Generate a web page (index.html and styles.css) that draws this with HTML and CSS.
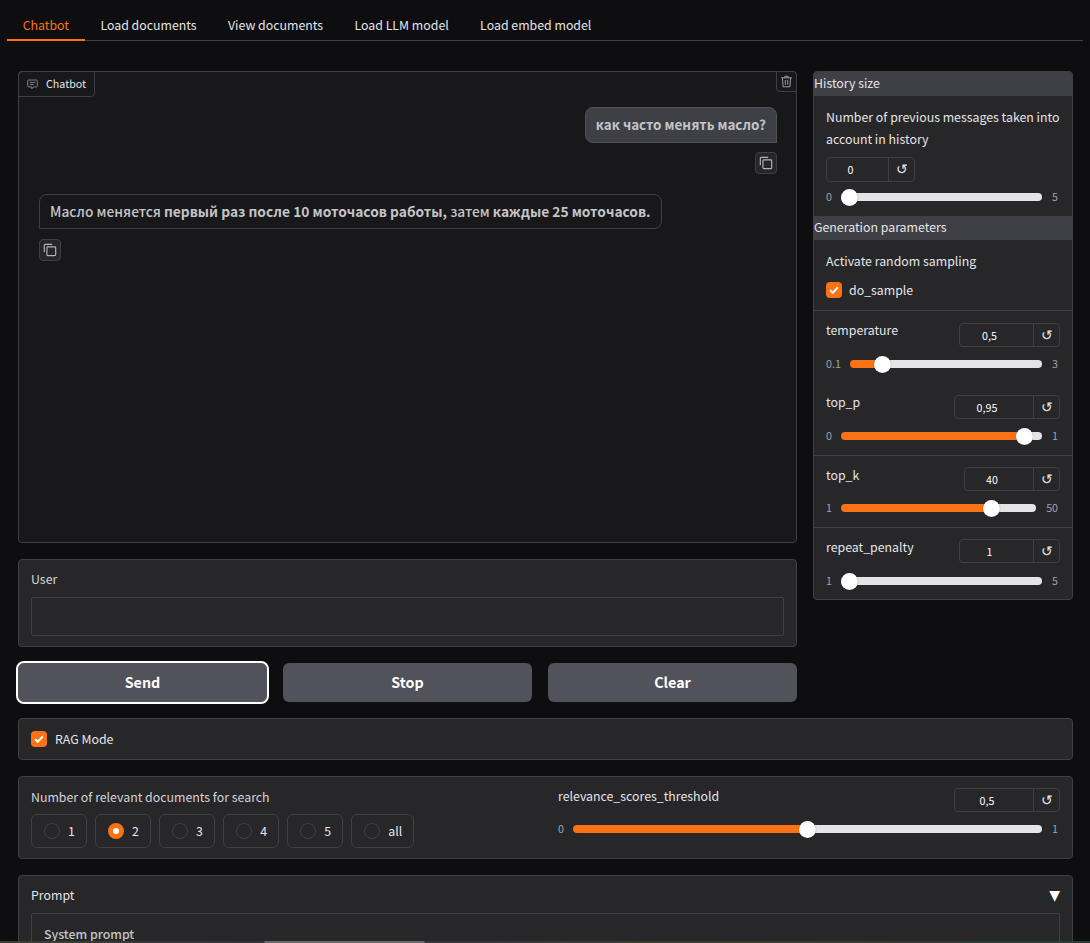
FILE: index.html
```html
<!DOCTYPE html>
<html lang="en">
<head>
    <meta charset="UTF-8">
    <meta name="viewport" content="width=device-width, initial-scale=1.0">
    <title>Chatbot</title>
    <link rel="stylesheet" href="styles.css">
</head>
<body>
    <nav class="tabs">
        <a class="tab active">Chatbot</a>
        <a class="tab">Load documents</a>
        <a class="tab">View documents</a>
        <a class="tab">Load LLM model</a>
        <a class="tab">Load embed model</a>
    </nav>

    <main class="page">
        <div class="top-row">
            <div class="left-col">
                <section class="chat">
                    <div class="chat-label">
                        <svg class="chat-icon" viewBox="0 0 16 16" width="11" height="11" fill="none" stroke="currentColor" stroke-width="1.3">
                            <path d="M2.5 1.5h11a1.5 1.5 0 0 1 1.5 1.5v7a1.5 1.5 0 0 1-1.5 1.5H9L7 14.5v-3H2.5A1.5 1.5 0 0 1 1 10V3a1.5 1.5 0 0 1 1.5-1.5z"/>
                            <path d="M4 5h8M4 8h6"/>
                        </svg>
                        Chatbot
                    </div>
                    <button class="chat-clear" aria-label="Clear">
                        <svg viewBox="0 0 16 16" width="13" height="13" fill="none" stroke="currentColor" stroke-width="1.2">
                            <path d="M1.5 3.5h13M6 3.5V1.5h4v2M3 3.5l.8 11h8.4l.8-11M6.5 6v6M9.5 6v6"/>
                        </svg>
                    </button>

                    <div class="msg-user">
                        <div class="bubble bubble-user">как часто менять масло?</div>
                        <button class="copy" aria-label="Copy">
                            <svg viewBox="0 0 16 16" width="14" height="14" fill="none" stroke="currentColor" stroke-width="1.3">
                                <path d="M1.5 10.5V2.5a1 1 0 0 1 1-1h8"/>
                                <rect x="4.5" y="4.5" width="10" height="10" rx="1"/>
                            </svg>
                        </button>
                    </div>
                    <div class="msg-bot">
                        <div class="bubble bubble-bot">Масло меняется <b>первый раз после 10 моточасов работы,</b> затем <b>каждые 25 моточасов.</b></div>
                        <button class="copy" aria-label="Copy">
                            <svg viewBox="0 0 16 16" width="14" height="14" fill="none" stroke="currentColor" stroke-width="1.3">
                                <path d="M1.5 10.5V2.5a1 1 0 0 1 1-1h8"/>
                                <rect x="4.5" y="4.5" width="10" height="10" rx="1"/>
                            </svg>
                        </button>
                    </div>
                </section>

                <section class="panel user-box">
                    <label class="field-label" for="userText">User</label>
                    <input class="user-input" id="userText" type="text">
                </section>

                <div class="actions">
                    <button class="btn btn-focus">Send</button>
                    <button class="btn">Stop</button>
                    <button class="btn">Clear</button>
                </div>
            </div>

            <aside class="side panel">
                <h3 class="side-head">History size</h3>
                <div class="block block-history">
                    <div class="block-text">Number of previous messages taken into account in history</div>
                    <div class="num num-history"><span class="num-val">0</span><span class="num-reset">↺</span></div>
                    <div class="slider-row">
                        <span class="lim">0</span>
                        <input type="range" min="0" max="5" step="1" value="0" style="--pct:0%">
                        <span class="lim">5</span>
                    </div>
                </div>

                <h3 class="side-head">Generation parameters</h3>
                <div class="block block-sample">
                    <div class="block-text">Activate random sampling</div>
                    <label class="check">
                        <span class="check-box"><svg viewBox="0 0 16 16" width="16" height="16"><path d="M4.2 8.3l2.6 2.5 5-5.4" fill="none" stroke="#fff" stroke-width="2"/></svg></span>
                        do_sample
                    </label>
                </div>

                <div class="block block-param block-first">
                    <div class="param-head">
                        <span>temperature</span>
                        <div class="num num-w101"><span class="num-val">0,5</span><span class="num-reset">↺</span></div>
                    </div>
                    <div class="slider-row">
                        <span class="lim">0.1</span>
                        <input type="range" min="0.1" max="3" step="0.1" value="0.5" style="--pct:17%">
                        <span class="lim">3</span>
                    </div>
                    <div class="param-head param-next">
                        <span>top_p</span>
                        <div class="num num-w106"><span class="num-val">0,95</span><span class="num-reset">↺</span></div>
                    </div>
                    <div class="slider-row">
                        <span class="lim">0</span>
                        <input type="range" min="0" max="1" step="0.05" value="0.95" style="--pct:91%">
                        <span class="lim">1</span>
                    </div>
                </div>

                <div class="block block-param">
                    <div class="param-head param-low">
                        <span>top_k</span>
                        <div class="num num-w96"><span class="num-val">40</span><span class="num-reset">↺</span></div>
                    </div>
                    <div class="slider-row">
                        <span class="lim">1</span>
                        <input type="range" min="1" max="50" step="1" value="40" style="--pct:77%">
                        <span class="lim">50</span>
                    </div>
                </div>

                <div class="block block-param block-last">
                    <div class="param-head param-low">
                        <span>repeat_penalty</span>
                        <div class="num num-w101"><span class="num-val">1</span><span class="num-reset">↺</span></div>
                    </div>
                    <div class="slider-row">
                        <span class="lim">1</span>
                        <input type="range" min="1" max="5" step="0.1" value="1" style="--pct:0%">
                        <span class="lim">5</span>
                    </div>
                </div>
            </aside>
        </div>

        <section class="panel rag">
            <label class="check">
                <span class="check-box"><svg viewBox="0 0 16 16" width="16" height="16"><path d="M4.2 8.3l2.6 2.5 5-5.4" fill="none" stroke="#fff" stroke-width="2"/></svg></span>
                RAG Mode
            </label>
        </section>

        <section class="panel search">
            <div class="search-docs">
                <div class="field-label">Number of relevant documents for search</div>
                <div class="radios">
                    <label class="radio"><span class="dot"></span>1</label>
                    <label class="radio"><span class="dot dot-on"></span>2</label>
                    <label class="radio"><span class="dot"></span>3</label>
                    <label class="radio"><span class="dot"></span>4</label>
                    <label class="radio"><span class="dot"></span>5</label>
                    <label class="radio"><span class="dot"></span>all</label>
                </div>
            </div>
            <div class="search-threshold">
                <div class="param-head param-low">
                    <span>relevance_scores_threshold</span>
                    <div class="num num-w106"><span class="num-val">0,5</span><span class="num-reset">↺</span></div>
                </div>
                <div class="slider-row">
                    <span class="lim">0</span>
                    <input type="range" min="0" max="1" step="0.05" value="0.5" style="--pct:50%">
                    <span class="lim">1</span>
                </div>
            </div>
        </section>

        <section class="panel prompt">
            <div class="prompt-head">
                <span>Prompt</span>
                <span class="arrow">▼</span>
            </div>
            <div class="prompt-box">System prompt</div>
        </section>
    </main>

    <div class="bottom-strip"></div>
</body>
</html>
```
FILE: styles.css
```css
/* General page styling */
html, body {
    height: 100%;
    overflow: hidden;
}

body {
    margin: 0;
    background: #0e0e11;
    color: #e4e4e7;
    font-family: "Noto Sans CJK SC", "Noto Sans", sans-serif;
    font-size: 12.35px;
    line-height: 22px;
}

* {
    box-sizing: border-box;
}

button {
    font-family: inherit;
    color: inherit;
    cursor: pointer;
}

/* Tabs */
.tabs {
    display: flex;
    margin: 10px 7px 0;
    height: 31px;
    border-bottom: 1px solid #3f3f46;
}

.tab {
    padding: 0 15.7px;
    height: 31px;
    line-height: 30px;
    color: #e4e4e7;
}

.tab.active {
    color: #f97316;
    border-bottom: 2px solid #f97316;
}

/* Main layout */
.page {
    padding: 30px 17px 0 18px;
}

.top-row {
    display: flex;
    gap: 16px;
    align-items: flex-start;
}

.left-col {
    width: 779px;
    flex: none;
}

.panel {
    background: #27272a;
    border: 1px solid #3f3f46;
    border-radius: 4px;
}

/* Chat window */
.chat {
    position: relative;
    height: 472px;
    background: #18181b;
    border: 1px solid #3f3f46;
    border-radius: 4px;
    padding: 35px 19px 0 20px;
}

.chat-label {
    position: absolute;
    left: -1px;
    top: -1px;
    display: flex;
    align-items: center;
    gap: 8px;
    height: 26px;
    width: 77px;
    padding-left: 8px;
    font-size: 10.7px;
    border: 1px solid #3f3f46;
    border-radius: 4px 0 4px 0;
}

.chat-icon {
    color: #8a8a92;
}

.chat-clear {
    position: absolute;
    right: -1px;
    top: -1px;
    width: 21px;
    height: 21px;
    padding: 0;
    display: flex;
    align-items: center;
    justify-content: center;
    background: #18181b;
    border: 1px solid #3f3f46;
    border-radius: 0 4px 0 4px;
    color: #a1a1aa;
}

.msg-user {
    display: flex;
    flex-direction: column;
    align-items: flex-end;
}

.msg-bot {
    display: flex;
    flex-direction: column;
    align-items: flex-start;
    margin-top: 20px;
}

.bubble {
    border: 1px solid #3f3f46;
    color: #c4c4c8;
    font-size: 13.75px;
    line-height: 22px;
    font-weight: 500;
}

.bubble-user {
    height: 36px;
    padding: 5px 10px;
    background: #3f3f46;
    border-color: #52525b;
    border-radius: 8px 8px 0 8px;
    font-size: 13.45px;
    font-weight: 700;
}

.bubble-bot {
    height: 35px;
    padding: 5px 10px;
    border-radius: 8px 8px 8px 0;
}

.bubble-bot b {
    font-weight: 700;
}

.copy {
    width: 22px;
    height: 22px;
    margin-top: 9px;
    padding: 0;
    display: flex;
    align-items: center;
    justify-content: center;
    background: #27272a;
    border: 1px solid #3f3f46;
    border-radius: 4px;
    color: #b4b4b8;
}

.msg-bot .copy {
    margin-top: 10px;
}

/* User input */
.user-box {
    margin-top: 16px;
    height: 88px;
    padding: 8px 12px 0;
}

.field-label {
    display: block;
    height: 22px;
    color: #d4d4d8;
}

.user-input {
    display: block;
    width: 100%;
    height: 39px;
    margin-top: 7px;
    background: #27272a;
    border: 1px solid #3f3f46;
    border-radius: 2px;
    color: #e4e4e7;
}

/* Buttons */
.actions {
    display: flex;
    gap: 16px;
    margin-top: 16px;
}

.btn {
    flex: 1;
    height: 39px;
    padding: 0 0 2px;
    background: #52525b;
    border: none;
    border-radius: 6px;
    color: #fff;
    font-size: 14.3px;
    font-weight: 700;
}

.btn-focus {
    outline: 2px solid #fff;
    outline-offset: 0;
}

/* Right column */
.side {
    width: 260px;
    flex: none;
    overflow: hidden;
}

.side-head {
    margin: 0;
    height: 24px;
    line-height: 23px;
    background: #3f3f46;
    font-size: 12.35px;
    font-weight: 400;
}

.block {
    padding: 0 12px;
}

.block-history {
    padding-top: 10px;
    height: 120px;
}

.block-text {
    color: #e4e4e7;
}

.block-sample {
    height: 70px;
    padding-top: 10px;
}

.block-sample .check {
    gap: 7px;
}

.block-param {
    padding-top: 11px;
    padding-bottom: 10px;
    border-top: 1px solid #3f3f46;
}

.block-first {
    padding-top: 12px;
}

.block-last {
    padding-bottom: 9px;
}

.block-last .slider-row {
    margin-top: 9px;
}

.param-head {
    display: flex;
    justify-content: space-between;
    align-items: flex-start;
    height: 24px;
}

.param-next {
    margin-top: 22px;
}

.param-head > span {
    line-height: 15px;
}

.param-low > span {
    padding-top: 1px;
}

/* Number box with reset */
.num {
    display: flex;
    height: 24px;
    border: 1px solid #3f3f46;
    border-radius: 4px;
    font-size: 10.7px;
    line-height: 24px;
    color: #fff;
}

.num-val {
    flex: 1;
    text-align: center;
    padding-right: 14px;
}

.num-reset {
    flex: none;
    width: 26px;
    text-align: center;
    border-left: 1px solid #3f3f46;
    font-size: 14px;
    line-height: 20px;
    color: #e4e4e7;
}

.num-history {
    width: 89px;
    height: 25px;
    margin-top: 7px;
}

.num-w96 { width: 96px; }
.num-w101 { width: 101px; }
.num-w106 { width: 106px; }

/* Sliders */
.slider-row {
    display: flex;
    align-items: center;
    gap: 9px;
    height: 18px;
    margin-top: 8px;
    color: #a1a1aa;
    font-size: 10.7px;
    line-height: 18px;
}

.block-history .slider-row {
    margin-top: 6px;
}

.lim {
    flex: none;
}

.lim:last-child {
    margin-left: 1px;
    margin-right: 2px;
}

input[type="range"] {
    -webkit-appearance: none;
    appearance: none;
    flex: 1;
    min-width: 0;
    height: 8px;
    margin: 0;
    border-radius: 4px;
    background: linear-gradient(to right, #f97316 var(--pct), #e4e4e7 var(--pct));
}

input[type="range"]::-webkit-slider-thumb {
    -webkit-appearance: none;
    width: 17px;
    height: 17px;
    border-radius: 50%;
    background: #fff;
    box-shadow: 0 0 1px rgba(0, 0, 0, 0.5);
}

/* Checkboxes */
.check {
    display: flex;
    align-items: center;
    gap: 8px;
    margin-top: 7px;
}

.check-box {
    width: 16px;
    height: 16px;
    background: #f97316;
    border-radius: 4px;
    display: flex;
}

/* RAG row */
.rag {
    margin-top: 16px;
    height: 42px;
    padding: 3px 12px 0;
}

.rag .check {
    margin-top: 6px;
}

/* Search settings */
.search {
    display: flex;
    margin-top: 16px;
    height: 83px;
    padding: 9px 12px 0;
}

.search-docs {
    width: 527px;
    flex: none;
}

.search-threshold {
    flex: 1;
    padding-top: 2px;
}

.radios {
    display: flex;
    gap: 8px;
    margin-top: 6px;
}

.radio {
    display: flex;
    align-items: center;
    gap: 8px;
    height: 34px;
    padding: 0 11.2px 0 12px;
    border: 1px solid #3f3f46;
    border-radius: 6px;
}

.dot {
    width: 16px;
    height: 16px;
    border-radius: 50%;
    border: 1px solid #3f3f46;
    background: #27272a;
}

.dot-on {
    border: 5px solid #f97316;
    background: #fff;
}

/* Prompt accordion */
.prompt {
    margin-top: 16px;
    height: 200px;
    padding: 8px 12px 0;
}

.prompt-head {
    display: flex;
    justify-content: space-between;
    height: 22px;
    color: #e4e4e7;
}

.arrow {
    color: #fff;
    font-family: "DejaVu Sans", sans-serif;
    font-size: 14px;
}

.prompt-box {
    margin-top: 7px;
    height: 100px;
    padding: 9px 12px;
    border: 1px solid #3f3f46;
    border-radius: 2px;
    color: #c4c4c8;
    font-weight: 500;
}

/* thin strip along the bottom edge of the capture */
.bottom-strip {
    position: fixed;
    left: 0;
    right: 0;
    bottom: 0;
    height: 2px;
    background: linear-gradient(to right, #3a4034 0, #30343c 264px, #6a6a68 265px, #6a6a68 424px, #34383c 425px, #3d3c30 740px, #2f3a34 1000px);
}
```
